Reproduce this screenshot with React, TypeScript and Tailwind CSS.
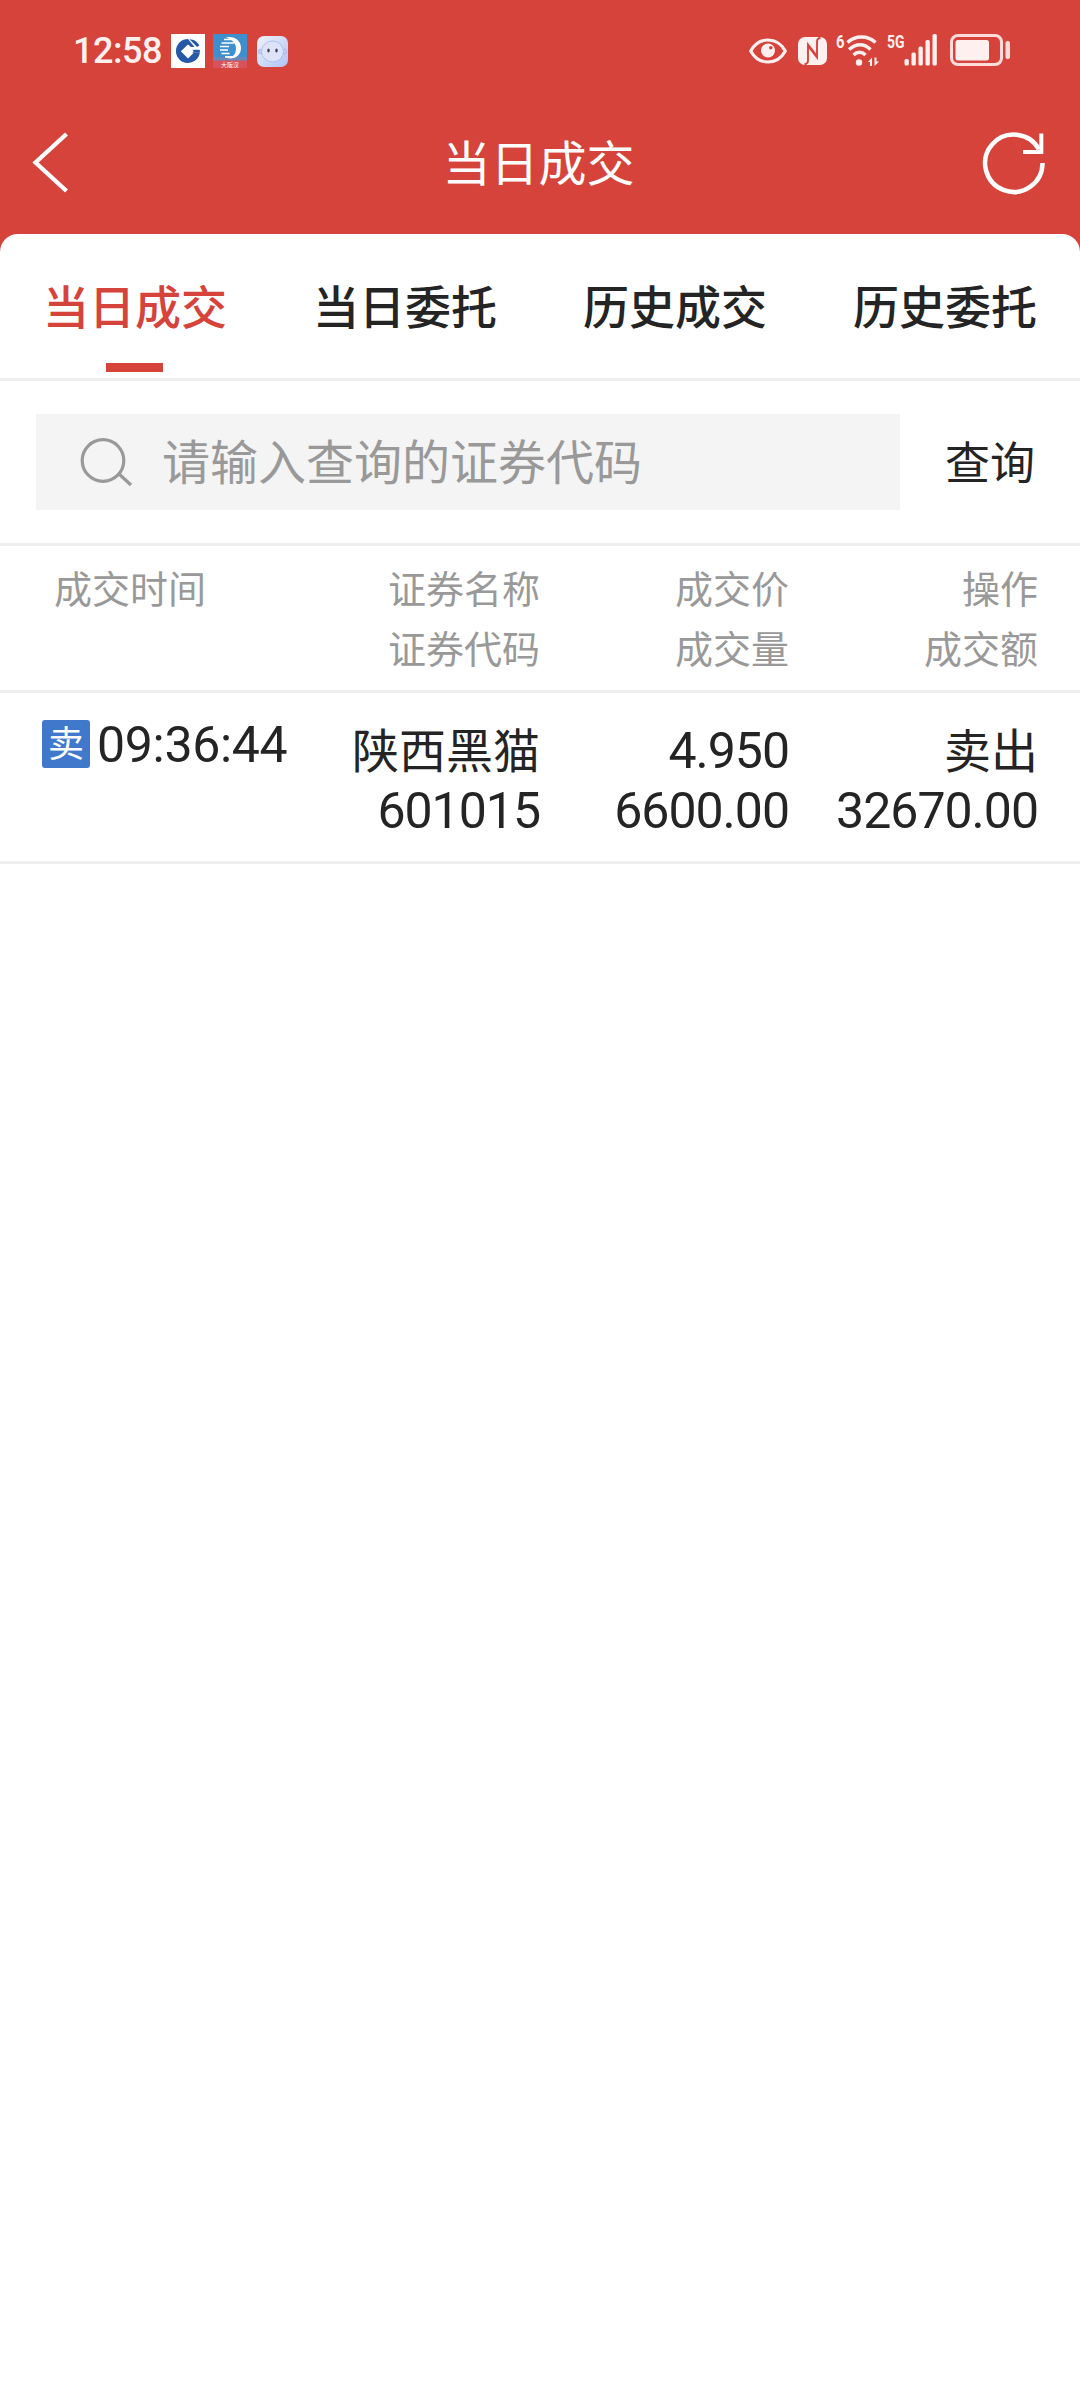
interface Deal {
  side: string;
  time: string;
  name: string;
  code: string;
  price: string;
  volume: string;
  action: string;
  amount: string;
}

const tabs = ['当日成交', '当日委托', '历史成交', '历史委托'];

const deals: Deal[] = [
  {
    side: '卖',
    time: '09:36:44',
    name: '陕西黑猫',
    code: '601015',
    price: '4.950',
    volume: '6600.00',
    action: '卖出',
    amount: '32670.00',
  },
];

const BankIcon = () => (
  <svg width="34" height="34" viewBox="0 0 34 34">
    <rect width="34" height="34" fill="#fff" />
    <path d="M17 5a12 12 0 1 0 11.8 14h-6.300L17 24.500 9.800 17.300 17 10.500l3 2.500h3.500L17 5z" fill="#2559a5" />
    <path d="M18.500 5.300c4.500.2 8 2.500 9.800 6.200l-2.300 1.500z" fill="#2559a5" />
    <path d="M17.500 17.300h11.300" stroke="#2559a5" strokeWidth="3" fill="none" />
    <path d="M17 11.500l5.800 5.800-5.800 5.800-5.800-5.800z" fill="#fff" />
  </svg>
);

const BrokerIcon = () => (
  <svg width="34" height="34" viewBox="0 0 34 34">
    <rect width="34" height="34" fill="#3d8fcd" />
    <rect y="23" width="34" height="4" fill="#6a86b8" />
    <rect y="26.500" width="34" height="7.500" fill="#d6525c" />
    <path d="M13 3.500c8-2 15 3 15 10.500s-6.500 12-14 10c6 0 9-4.500 9-9.500s-3.500-9-10-11z" fill="#fff" />
    <path d="M11 5.500h10M8.500 9h13M7 12.500h9M7 16h8M8.500 19.500h8M12 22.800h9" stroke="#fff" strokeWidth="1.700" />
    <text x="17" y="32.500" textAnchor="middle" fontSize="6" fill="#fff">大阪汉</text>
  </svg>
);

const AssistantIcon = () => (
  <svg width="31" height="31" viewBox="0 0 31 31">
    <defs>
      <linearGradient id="face" x1="0" y1="0" x2="1" y2="1">
        <stop offset="0" stopColor="#f1f2fa" />
        <stop offset="1" stopColor="#aec4f6" />
      </linearGradient>
    </defs>
    <rect width="31" height="31" rx="7" fill="url(#face)" />
    <circle cx="3.800" cy="15.500" r="2.300" fill="#c3d0f5" stroke="#98b0e8" strokeWidth=".8" />
    <circle cx="27.200" cy="15.500" r="2.300" fill="#c3d0f5" stroke="#98b0e8" strokeWidth=".8" />
    <ellipse cx="15.500" cy="15.500" rx="11" ry="10.500" fill="#dde4fa" stroke="#a3b6ea" strokeWidth=".8" />
    <ellipse cx="11.500" cy="14.500" rx="1.200" ry="2" fill="#463e52" />
    <ellipse cx="19.500" cy="14.500" rx="1.200" ry="2" fill="#463e52" />
  </svg>
);

const EyeIcon = () => (
  <svg width="38" height="26" viewBox="0 0 38 26" fill="none">
    <path d="M1.700 13C5.500 6 12 2 19 2s13.500 4 17.300 11C32.500 20 26 24 19 24S5.500 20 1.700 13z" stroke="#fff0f0" strokeWidth="3.200" strokeLinejoin="round" />
    <circle cx="19" cy="12.500" r="7" fill="#fff0f0" />
    <circle cx="21.800" cy="9.800" r="1.800" fill="#d6433b" />
  </svg>
);

const NfcIcon = () => (
  <svg width="29" height="28" viewBox="0 0 29 28" fill="none">
    <rect width="29" height="28" rx="7" fill="#fff0f0" />
    <path d="M6.500 27.300c2.500-.3 3.500-1.500 3.500-4V7.500l8.500 11M22.500.7c-2.500.3-3.500 1.500-3.500 4v15.800L10.500 9.500" stroke="#d6433b" strokeWidth="1.900" />
  </svg>
);

const WifiIcon = () => (
  <svg width="44" height="34" viewBox="0 0 44 34" fill="none" className="overflow-visible">
    <text x="0" y="14" fontFamily="Roboto, sans-serif" fontWeight="700" fontSize="18" fill="#fff0f0" textLength="8.500" lengthAdjust="spacingAndGlyphs">6</text>
    <path d="M11.500 8.500q6-5.500 14-5.500t14 5.500M13 15.500q5.500-4.700 11-4.700t10.500 4.700M17.500 21q3-2.700 6-2.700t6 2.700" stroke="#fff0f0" strokeWidth="3.600" />
    <circle cx="23" cy="28.500" r="3.200" fill="#fff0f0" />
    <path d="M36 23.500v8.500h-2v-4h-2zM38.500 23.500v8.500l4.500-4.500h-2.500v-4z" fill="#fff0f0" />
  </svg>
);

const SignalIcon = () => (
  <svg width="52" height="34" viewBox="0 0 52 34" className="overflow-visible">
    <text x="0" y="14" fontFamily="Roboto, sans-serif" fontWeight="700" fontSize="18" fill="#fff0f0" textLength="17.500" lengthAdjust="spacingAndGlyphs">5G</text>
    <rect x="17.500" y="25" width="4.300" height="6.500" rx="1.500" fill="#fff0f0" />
    <rect x="24.500" y="18.500" width="4.300" height="13" rx="1.500" fill="#fff0f0" />
    <rect x="31.500" y="12.500" width="4.300" height="19" rx="1.500" fill="#fff0f0" />
    <rect x="38.500" y="6" width="4.300" height="25.500" rx="1.500" fill="#fff0f0" />
    <rect x="45.500" y="0" width="4.300" height="31.500" rx="1.500" fill="#fff0f0" />
  </svg>
);

const BatteryIcon = () => (
  <svg width="61" height="32" viewBox="0 0 61 32" fill="none">
    <rect x="1.500" y="1.500" width="50" height="29" rx="6.500" stroke="#ffdcdc" strokeWidth="3" />
    <rect x="5.500" y="6" width="33.500" height="20.500" rx="2.500" fill="#fff0f0" />
    <rect x="55.500" y="7" width="4.500" height="18" rx="2" fill="#ffdcdc" />
  </svg>
);

const StatusBar = () => (
  <div className="flex h-[100px] items-center pl-[73px] pr-[69px]">
    <span className="w-[98px] pt-px font-[Roboto,sans-serif] text-[36px] leading-none font-medium tracking-[-0.5px] text-[#fff0f0]">12:58</span>
    <div className="flex items-center pt-0.5">
      <BankIcon />
      <div className="ml-2">
        <BrokerIcon />
      </div>
      <div className="ml-[10px]">
        <AssistantIcon />
      </div>
    </div>
    <div className="ml-auto flex items-start pt-px">
      <div className="pt-[4px]">
        <EyeIcon />
      </div>
      <div className="ml-[11px] pt-[3px]">
        <NfcIcon />
      </div>
      <div className="ml-[9px]">
        <WifiIcon />
      </div>
      <div className="ml-[7px]">
        <SignalIcon />
      </div>
      <div className="ml-[11px]">
        <BatteryIcon />
      </div>
    </div>
  </div>
);

const NavBar = () => (
  <div className="flex h-[125px] items-center justify-between px-[32px]">
    <div className="w-[66px]">
      <svg width="38" height="62" viewBox="0 0 38 62" fill="none">
        <path d="M34.500 2L3.500 30.500l31 28.500" stroke="#fff" strokeWidth="4.300" />
      </svg>
    </div>
    <h1 className="pr-[3px] pb-[6px] text-[48px] leading-[60px] text-white">当日成交</h1>
    <svg width="66" height="66" viewBox="0 0 66 66" fill="none" stroke="#fff" strokeWidth="4.500">
      <path d="M60.500 33A28.700 28.700 0 1 1 57 19.500" />
      <path d="M59.300 3.500V22H41" strokeWidth="4" />
    </svg>
  </div>
);

export default function App() {
  return (
    <div className="flex min-h-[2400px] w-[1080px] flex-col bg-[#d6433b] font-['Noto_Sans_CJK_SC',sans-serif] text-[#242424]">
      <header className="h-[234px]">
        <StatusBar />
        <NavBar />
      </header>

      <main className="flex-1 rounded-t-[18px] bg-white">
        <nav className="grid h-[147px] grid-cols-4 border-b-3 border-[#eeeeee]">
          {tabs.map((tab, i) => (
            <button key={tab} className="flex flex-col items-center pt-[40px]">
              <span className={i === 0 ? 'text-[46px] leading-[60px] font-medium text-[#d6433b]' : 'text-[46px] leading-[60px] font-medium'}>
                {tab}
              </span>
              {i === 0 && <span className="mt-[29px] mr-px h-[9px] w-[57px] bg-[#d6433b]" />}
            </button>
          ))}
        </nav>

        <div className="flex h-[165px] items-center border-b-3 border-[#eeeeee] pl-9">
          <div className="flex h-[96px] w-[864px] items-center bg-[#f4f4f4] pl-[44px] text-[#999999]">
            <svg width="54" height="52" viewBox="0 0 54 52" fill="none" stroke="#999999" strokeWidth="3.200">
              <circle cx="23" cy="24.500" r="20.800" />
              <path d="M38.500 37.500L51 49" />
            </svg>
            <span className="ml-[28px] pb-1.5 text-[48px] leading-[60px]">请输入查询的证券代码</span>
          </div>
          <button className="ml-[45px] pb-0.5 text-[45px] leading-[60px]">查询</button>
        </div>

        <div className="grid h-[147px] grid-cols-[486px_249px_249px] border-b-3 border-[#eeeeee] pt-[11px] pl-[54px] text-right text-[38px] leading-[60px] text-[#999999]">
          <div className="flex justify-between">
            <span>成交时间</span>
            <div>
              <div>证券名称</div>
              <div>证券代码</div>
            </div>
          </div>
          <div>
            <div>成交价</div>
            <div>成交量</div>
          </div>
          <div>
            <div>操作</div>
            <div>成交额</div>
          </div>
        </div>

        {deals.map((deal) => (
          <div key={deal.code} className="grid h-[171px] grid-cols-[498px_249px_249px] border-b-3 border-[#eeeeee] pt-[28px] pl-[42px] text-right text-[47px] leading-[60px]">
            <div className="flex items-start justify-between">
              <div className="-mt-px flex h-[48px] items-center gap-[7px]">
                <span className="flex h-[48px] w-[48px] items-center justify-center rounded-[3px] bg-[#4078cb] pb-1.5 text-[36px] leading-none text-white">
                  {deal.side}
                </span>
                <span className="pt-0.5 font-[Roboto,sans-serif] text-[50px] leading-[48px] tracking-[-0.3px]">{deal.time}</span>
              </div>
              <div>
                <div className="-mt-[3px] mb-[3px]">{deal.name}</div>
                <div className="font-[Roboto,sans-serif] text-[50px] tracking-[-1px]">{deal.code}</div>
              </div>
            </div>
            <div className="font-[Roboto,sans-serif] text-[50px] tracking-[-1px]">
              <div>{deal.price}</div>
              <div>{deal.volume}</div>
            </div>
            <div>
              <div className="-mt-[3px] mb-[3px]">{deal.action}</div>
              <div className="font-[Roboto,sans-serif] text-[50px] tracking-[-1px]">{deal.amount}</div>
            </div>
          </div>
        ))}
      </main>
    </div>
  );
}
